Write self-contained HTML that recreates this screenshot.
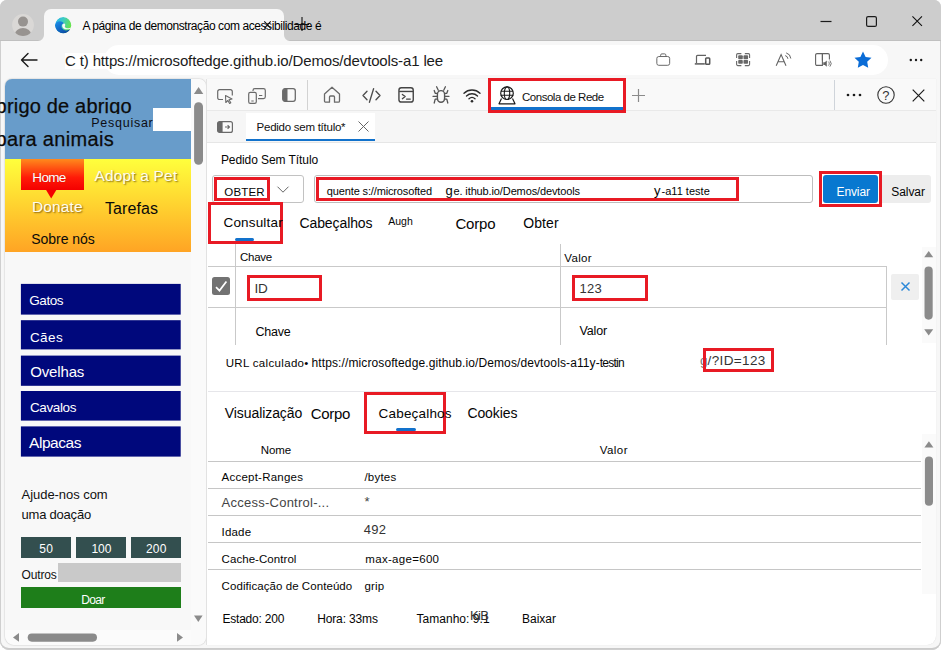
<!DOCTYPE html>
<html lang="pt"><head><meta charset="utf-8"><title>Consola de Rede</title>
<style>
html,body{margin:0;padding:0}
body{width:941px;height:650px;overflow:hidden;position:relative;background:#fff;font-family:"Liberation Sans",sans-serif;color:#1b1b1b}
.a{position:absolute}
.t{position:absolute;white-space:nowrap;line-height:20px;font-size:12px}
.rb{position:absolute;border:3px solid #e81a24;box-sizing:border-box}
svg{position:absolute;overflow:visible}
.hl{position:absolute;height:1px;background:#c8c8c8}
.vl{position:absolute;width:1px;background:#c8c8c8}
</style></head><body>
<div class="a" style="left:0;top:0;width:941px;height:650px;background:#f7f7f7;border-radius:7px 7px 9px 9px;overflow:hidden;box-shadow:inset 0 0 0 1px #cfcfcf,inset 0 -2px 0 #cbcbcb">
 <div class="a" style="left:0;top:0;width:941px;height:40.500px;background:#cdcdcd;box-shadow:inset 0 -1px 0 rgba(0,0,0,.06)"></div>
 <div class="a" style="left:44px;top:9px;width:240px;height:34px;background:#f7f7f7;border-radius:7px 7px 0 0"></div>
 <svg style="left:38px;top:34.500px" width="6" height="6" viewBox="0 0 6 6"><path d="M6 0V6H0A6 6 0 0 0 6 0z" fill="#f7f7f7"></path></svg>
 <svg style="left:284px;top:34.500px" width="6" height="6" viewBox="0 0 6 6"><path d="M0 0V6H6A6 6 0 0 1 0 0z" fill="#f7f7f7"></path></svg>
</div>
<!-- chrome -->
<!-- profile -->
<svg style="left:12px;top:14.200px" width="22" height="22" viewBox="0 0 22 22"><defs><clipPath id="pc"><circle cx="11" cy="11" r="10.900"></circle></clipPath></defs><circle cx="11" cy="11" r="10.900" fill="#dad8d6"></circle><circle cx="11" cy="7.600" r="5" fill="#979390"></circle><ellipse cx="11" cy="20.500" rx="8.200" ry="6.500" fill="#979390" clip-path="url(#pc)"></ellipse></svg>
<!-- edge logo -->
<svg style="left:54.800px;top:16.700px" width="16.400" height="16.400" viewBox="0 0 100 100"><defs><linearGradient id="eg1" x1="0" y1="0" x2="1" y2=".35"><stop offset="0" stop-color="#2cb2f0"></stop><stop offset=".5" stop-color="#3ccbc4"></stop><stop offset="1" stop-color="#68e34e"></stop></linearGradient><linearGradient id="eg2" x1="0" y1="0" x2=".8" y2="1"><stop offset="0" stop-color="#1c92ea"></stop><stop offset=".55" stop-color="#1266c4"></stop><stop offset="1" stop-color="#0b479a"></stop></linearGradient><clipPath id="ec"><circle cx="50" cy="50" r="50"></circle></clipPath></defs><g clip-path="url(#ec)"><circle cx="50" cy="50" r="50" fill="url(#eg1)"></circle><path d="M52 38C43 42 41 56 48 65C57 76 76 77 101 71L101 61C93 68 78 70 68 67C60 64 58 58 62 52C65 45 59 38 52 38Z" fill="#f7f7f7"></path><path d="M0 50C1 36 14 26 30 26C42 26 52 32 54 40C44 40 37 50 40 62C44 76 60 84 76 81C84 79.500 90 77 95 73C88 90 70 100 50 100C22 100 0 78 0 50Z" fill="url(#eg2)"></path></g></svg>
<div class="t" style="left: 82.4px; top: 16px; font-size: 12px; color: rgb(0, 0, 0); letter-spacing: -0.416px;">A página de demonstração com acessibilidade é</div>
<svg style="left:264.300px;top:21.300px" width="7" height="7.600" viewBox="0 0 7 7.600"><path d="M.3.300l6.400 7M6.700.3l-6.400 7" stroke="#111" stroke-width="1.100" fill="none"></path></svg>
<svg style="left:294.500px;top:17.200px" width="14" height="14" viewBox="0 0 14 14"><path d="M7 0v14M0 7.500h14" stroke="#111" stroke-width="1.100" fill="none"></path></svg>
<!-- window controls -->
<svg style="left:820px;top:16px" width="12" height="12" viewBox="0 0 12 12"><path d="M0.500 5.500h11" stroke="#1b1b1b" stroke-width="1.200"></path></svg>
<svg style="left:866px;top:16px" width="11" height="11" viewBox="0 0 11 11"><rect x=".6" y=".6" width="9.800" height="9.800" rx="1.500" fill="none" stroke="#1b1b1b" stroke-width="1.200"></rect></svg>
<svg style="left:911.700px;top:15.800px" width="10.400" height="10.400" viewBox="0 0 12 12"><path d="M.5.500l11 11M11.500.5l-11 11" stroke="#111" stroke-width="1.250" fill="none"></path></svg>
<!-- back arrow -->
<svg style="left:20px;top:52px" width="18" height="16" viewBox="0 0 18 16"><path d="M17 8H1.500M8 1.500L1.500 8 8 14.500" stroke="#1b1b1b" stroke-width="1.400" fill="none" stroke-linecap="round" stroke-linejoin="round"></path></svg>
<!-- address pill -->
<div class="a" style="left:104px;top:45px;width:784px;height:30px;background:#fff;border-radius:15px"></div>
<div class="a" style="left:65px;top:52.500px;width:45px;height:16.500px;background:#fff"></div>
<div class="t" style="left: 65px; top: 51px; font-size: 15px; letter-spacing: -0.138px;">C t) https://microsoftedge.github.io/Demos/devtools-a1 lee</div>
<!-- toolbar icons -->
<svg style="left:656px;top:53px" width="14.500" height="13.200" viewBox="0 0 16 15"><rect x=".7" y="4" width="14.600" height="10" rx="2.200" fill="none" stroke="#636363" stroke-width="1.100"></rect><path d="M5 4V2.500A1.500 1.500 0 0 1 6.500 1h3A1.500 1.500 0 0 1 11 2.500V4" fill="none" stroke="#636363" stroke-width="1.100"></path></svg>
<svg style="left:694px;top:53px" width="17" height="13" viewBox="0 0 17 13"><path d="M2.500 10V3.400A1 1 0 0 1 3.500 2.400H12" fill="none" stroke="#636363" stroke-width="1.200"></path><path d="M.8 10.900h10" stroke="#5a5a5a" stroke-width="1.500"></path><rect x="11.700" y="4.900" width="4" height="6.400" rx=".8" fill="#fff" stroke="#555" stroke-width="1.500"></rect></svg>
<svg style="left:736px;top:53px" width="14.200" height="13.200" viewBox="0 0 14 13"><path d="M5.300.6H1.800A1.200 1.200 0 0 0 .6 1.800V5M8.700.6h3.500a1.200 1.200 0 0 1 1.200 1.200V5M5.300 12.400H1.800A1.200 1.200 0 0 1 .6 11.200V8M8.700 12.400h3.500a1.200 1.200 0 0 0 1.200-1.200V8" fill="none" stroke="#6a6a6a" stroke-width="1.100"></path><rect x="2.200" y="2.300" width="4.500" height="3.800" rx=".8" fill="#686868"></rect><rect x="7.400" y="2.300" width="4.500" height="3.800" rx=".8" fill="#686868"></rect><rect x="2.200" y="6.900" width="4.500" height="3.800" rx=".8" fill="#686868"></rect><rect x="7.400" y="6.900" width="4.500" height="3.800" rx=".8" fill="#686868"></rect></svg>
<svg style="left:775px;top:52px" width="17" height="15" viewBox="0 0 17 15"><path d="M1.200 13.700L6.100 2.600l4.900 11.100M3 9.800h6.200" fill="none" stroke="#636363" stroke-width="1.100"></path><path d="M10.200 3.600a3.600 3.600 0 0 1 2.700 3.200M11.200 .9a6.300 6.300 0 0 1 4.600 5.600" fill="none" stroke="#636363" stroke-width="1"></path></svg>
<svg style="left:815px;top:53px" width="17" height="14" viewBox="0 0 17 14"><path d="M7.400 12.400H2A1.400 1.400 0 0 1 .6 11V2A1.400 1.400 0 0 1 2 .6H7.400zM7.400.6H13A1.400 1.400 0 0 1 14.400 2V6.500" fill="none" stroke="#636363" stroke-width="1.100"></path><path d="M7.400 .6V7.500" stroke="#636363" stroke-width="1.100"></path><path d="M8.300 9.300h1.500l2-1.900v6.400l-2-1.900H8.300z" fill="#636363"></path><path d="M13.300 8.600a2.600 2.600 0 0 1 0 4M14.900 7.600a4.500 4.500 0 0 1 0 6" fill="none" stroke="#636363" stroke-width=".9"></path></svg>
<svg style="left:854px;top:51px" width="18" height="17" viewBox="0 0 18 17"><path d="M9 .5l2.600 5.400 5.900.8-4.300 4.100 1 5.900L9 13.900l-5.200 2.800 1-5.900L.5 6.700l5.900-.8z" fill="#0a6cd6"></path></svg>
<svg style="left:908px;top:58px" width="16" height="4" viewBox="0 0 16 4"><circle cx="2.800" cy="2" r="1.200" fill="#1b1b1b"></circle><circle cx="8" cy="2" r="1.200" fill="#1b1b1b"></circle><circle cx="13.200" cy="2" r="1.200" fill="#1b1b1b"></circle></svg>
<!-- page -->

<div class="a" style="left:5px;top:79px;width:201px;height:566px;background:#f8f8f8;border-radius:7px 7px 8px 9px;overflow:hidden;box-shadow:0 0 1.500px rgba(0,0,0,.35)">
 <div class="a" style="left:0;top:0;width:186px;height:80px;background:#689cca"></div>
 <div class="a" style="left:0;top:80px;width:186px;height:93px;background:linear-gradient(#ffff3c 0%,#ffe033 35%,#ffa424 100%)"></div>
 <div class="a" style="left:16px;top:80px;width:63px;height:31px;background:linear-gradient(#ff8a1c 0%,#ff1a08 60%,#f40000 100%)"></div>
 <svg style="left:0;top:0" width="100" height="130"><path d="M40.800 110.500h10.800l-5.400 9z" fill="#f40000"></path></svg>
 <div class="a" style="left:148px;top:29px;width:38px;height:23px;background:#fff"></div>
 <div class="a" style="left:186px;top:0;width:15px;height:566px;background:#fafafa"></div>
</div>
<div class="t" style="left: -4.4px; top: 96px; font-size: 20px; color: rgb(11, 11, 11); -webkit-text-stroke: 0.25px rgb(11, 11, 11); letter-spacing: 0.184px;">brigo de abrigo</div>
<div class="t" style="left: -4.5px; top: 129px; font-size: 20px; color: rgb(11, 11, 11); -webkit-text-stroke: 0.25px rgb(11, 11, 11); letter-spacing: 0.332px;">para animais</div>
<div class="a" style="left:90px;top:113.500px;width:63px;height:17px;background:#689cca"></div>
<div class="t" style="left: 91.3px; top: 113px; font-size: 12.5px; color: rgb(12, 12, 20); letter-spacing: 0.734px;">Pesquisar</div>
<div class="t" style="left: 32.3px; top: 168px; font-size: 13.5px; color: rgb(255, 255, 255); text-shadow: rgba(120, 40, 0, 0.5) 0px 0px 1px; letter-spacing: -0.654px;">Home</div>
<div class="t" style="left: 94.4px; top: 166px; font-size: 15.5px; color: rgb(255, 253, 238); text-shadow: rgba(60, 30, 0, 0.6) 1px 1px 1.5px; letter-spacing: 0.18px;">Adopt a Pet</div>
<div class="t" style="left: 32px; top: 197px; font-size: 15.5px; color: rgb(255, 253, 238); text-shadow: rgba(60, 30, 0, 0.6) 1px 1px 1.5px; letter-spacing: 0.103px;">Donate</div>
<div class="t" style="left: 105px; top: 199px; font-size: 16px; color: rgb(10, 10, 10); letter-spacing: 0.076px;">Tarefas</div>
<div class="t" style="left: 31.2px; top: 229px; font-size: 14px; color: rgb(10, 10, 10); letter-spacing: -0.025px;">Sobre nós</div>
<svg style="left:0;top:0" width="200" height="1"><rect x="20.900" y="283.9" width="159.800" height="30.7" fill="#00087c"></rect></svg>
<div class="t" style="left: 29.2px; top: 291px; font-size: 13.5px; color: rgb(255, 255, 255); letter-spacing: -0.406px;">Gatos</div>
<svg style="left:0;top:0" width="200" height="1"><rect x="20.900" y="320.2" width="159.800" height="29.2" fill="#00087c"></rect></svg>
<div class="t" style="left: 30px; top: 328px; font-size: 13.5px; color: rgb(255, 255, 255); letter-spacing: 0.371px;">Cães</div>
<svg style="left:0;top:0" width="200" height="1"><rect x="20.900" y="355.6" width="159.800" height="30.2" fill="#00087c"></rect></svg>
<div class="t" style="left: 30.2px; top: 362px; font-size: 15px; color: rgb(255, 255, 255); letter-spacing: -0.147px;">Ovelhas</div>
<svg style="left:0;top:0" width="200" height="1"><rect x="20.900" y="391" width="159.800" height="29.6" fill="#00087c"></rect></svg>
<div class="t" style="left: 30px; top: 398px; font-size: 13.5px; color: rgb(255, 255, 255); letter-spacing: -0.397px;">Cavalos</div>
<svg style="left:0;top:0" width="200" height="1"><rect x="20.900" y="426.4" width="159.800" height="30.2" fill="#00087c"></rect></svg>
<div class="t" style="left: 29px; top: 433px; font-size: 15.5px; color: rgb(255, 255, 255); letter-spacing: -0.451px;">Alpacas</div>
<div class="t" style="left: 21.6px; top: 485px; font-size: 13px; color: rgb(17, 17, 17); letter-spacing: -0.055px;">Ajude-nos com</div>
<div class="t" style="left: 21.6px; top: 505px; font-size: 13px; color: rgb(17, 17, 17); letter-spacing: -0.226px;">uma doação</div>
<div class="a" style="left:20.8px;top:536.8px;width:50.1px;height:21px;background:#334f4f"></div>
<div class="t" style="left: 39.3px; top: 539px; font-size: 12px; color: rgb(255, 255, 255); letter-spacing: 0.32px;">50</div>
<div class="a" style="left:75.9px;top:536.8px;width:50.1px;height:21px;background:#334f4f"></div>
<div class="t" style="left: 91.4px; top: 539px; font-size: 12px; color: rgb(255, 255, 255); letter-spacing: 0.056px;">100</div>
<div class="a" style="left:130.7px;top:536.8px;width:50.5px;height:21px;background:#334f4f"></div>
<div class="t" style="left: 146px; top: 539px; font-size: 12px; color: rgb(255, 255, 255); letter-spacing: 0.156px;">200</div>
<div class="t" style="left: 21.6px; top: 565px; font-size: 12px; color: rgb(17, 17, 17); letter-spacing: -0.169px;">Outros</div>
<div class="a" style="left:58.200px;top:563.400px;width:123px;height:18.200px;background:#c9c9c9"></div>
<div class="a" style="left:20.800px;top:587.200px;width:160.400px;height:20.500px;background:#1e7e1a"></div>
<div class="t" style="left: 81.2px; top: 590px; font-size: 12px; color: rgb(255, 255, 255); letter-spacing: -0.629px;">Doar</div>

<div class="a" style="left:5px;top:629.500px;width:186px;height:15.500px;background:#fbfbfb;border-radius:0 0 0 9px"></div>
<svg style="left:191px;top:79px" width="15" height="566" viewBox="0 0 15 566">
 <path d="M2.900 14.900L7.600 7.900l4.700 7z" fill="#8b8b8b"></path>
 <rect x="3.100" y="23.300" width="8.900" height="62.400" rx="4.400" fill="#8b8b8b"></rect>
 <path d="M3 536.500L7.300 543l4.300-6.500z" fill="#8b8b8b"></path>
</svg>
<svg style="left:5px;top:630px" width="186" height="15" viewBox="0 0 186 15">
 <path d="M14 3L8 7.400 14 11.800z" fill="#8b8b8b"></path>
 <rect x="22.700" y="3.400" width="69.300" height="8.300" rx="4.100" fill="#8b8b8b"></rect>
 <path d="M172 3L178 7.400 172 11.800z" fill="#8b8b8b"></path>
</svg>
<!-- devtools -->

<div class="a" style="left:207px;top:78.500px;width:729px;height:566.500px;background:#fff;border-radius:0 0 9px 0;overflow:hidden;box-shadow:-1px 0 0 #e2e2e2,0 0 1px rgba(0,0,0,.15)">
 <div class="a" style="left:0;top:0;width:729px;height:31.500px;background:#f9f9f9;border-bottom:1px solid #e9e9e9"></div>
 <div class="a" style="left:0;top:32.500px;width:729px;height:30.500px;background:#f6f6f6;border-bottom:1px solid #e6e6e6"></div>
 <div class="a" style="left:39px;top:34px;width:129px;height:28.500px;background:#fff;border-bottom:2px solid #1272cc;box-sizing:border-box"></div>
</div>

<svg style="left:217px;top:89px" width="16" height="15" viewBox="0 0 16 15"><path d="M6 10.500H2.500A1.800 1.800 0 0 1 .7 8.700V2.500A1.800 1.800 0 0 1 2.500.7h11A1.800 1.800 0 0 1 15.300 2.500v4" fill="none" stroke="#6a6a6a" stroke-width="1.200"></path><path d="M8.500 6.500l6.500 3.500-3 .8 1.800 3-1.200.7-1.800-3-2 2z" fill="none" stroke="#6a6a6a" stroke-width="1.100" stroke-linejoin="round"></path></svg>
<svg style="left:248px;top:88px" width="18" height="16" viewBox="0 0 18 16"><path d="M5 3V2.500A1.800 1.800 0 0 1 6.800.7h8.700A1.800 1.800 0 0 1 17.300 2.500v6.300a1.800 1.800 0 0 1-1.800 1.800H10" fill="none" stroke="#6a6a6a" stroke-width="1.200"></path><rect x=".7" y="4.300" width="7.600" height="11" rx="1.600" fill="none" stroke="#6a6a6a" stroke-width="1.200"></rect><path d="M3.300 13h2.400M11 7.500h3.300" stroke="#6a6a6a" stroke-width="1.100"></path></svg>
<svg style="left:282px;top:88px" width="14" height="14" viewBox="0 0 14 14"><rect x=".7" y=".7" width="12.600" height="12.600" rx="2.200" fill="none" stroke="#6a6a6a" stroke-width="1.300"></rect><path d="M1 2.500A1.500 1.500 0 0 1 2.500 1H5.500V13H2.500A1.500 1.500 0 0 1 1 11.500z" fill="#6a6a6a"></path></svg>
<div class="a" style="left:307px;top:79.500px;width:1px;height:30px;background:#d2d2d2"></div>
<svg style="left:323px;top:86px" width="18" height="17" viewBox="0 0 18 17"><path d="M1.500 8L9 1.200 16.500 8v7a1.200 1.200 0 0 1-1.200 1.200H11.500V11a1 1 0 0 0-1-1h-3a1 1 0 0 0-1 1v5.200H2.700A1.200 1.200 0 0 1 1.500 15z" fill="none" stroke="#6a6a6a" stroke-width="1.300" stroke-linejoin="round"></path></svg>
<svg style="left:361.500px;top:87.500px" width="19" height="15" viewBox="0 0 19 15"><path d="M5 3.200L1 7.500 5 11.800M14 3.200l4 4.300-4 4.300M11.600.7l-4.200 13.600" fill="none" stroke="#4d4d4d" stroke-width="1.350" stroke-linecap="round" stroke-linejoin="round"></path></svg>
<svg style="left:398px;top:87px" width="16.200" height="15.800" viewBox="0 0 17 17"><rect x=".8" y=".8" width="15.400" height="15.400" rx="2.600" fill="none" stroke="#444" stroke-width="1.500"></rect><path d="M1 4.800h15" stroke="#444" stroke-width="1.500"></path><path d="M4.500 8l3 2.300-3 2.300M9 13h4" fill="none" stroke="#444" stroke-width="1.400" stroke-linecap="round" stroke-linejoin="round"></path></svg>
<svg style="left:432.300px;top:85.800px" width="18" height="18" viewBox="0 0 18 18"><rect x="5.400" y="4.600" width="7.200" height="11.600" rx="3.600" fill="none" stroke="#555" stroke-width="1.400"></rect><path d="M6.300 4.200L4.600.8M11.700 4.200L13.400.8M5.400 10.300H1M5.400 7.300H3.200L2.200 4.500M5.600 13.200H3.200L2.200 17M12.600 10.300H17M12.600 7.300h2.200l1-2.800M12.400 13.200h2.400l1 3.800" fill="none" stroke="#555" stroke-width="1.300" stroke-linecap="round" stroke-linejoin="round"></path></svg>
<svg style="left:463px;top:87.500px" width="18" height="15" viewBox="0 0 18 15"><path d="M1 5.200a11.500 11.500 0 0 1 16 0M3.500 8a8 8 0 0 1 11 0M6 10.700a4.500 4.500 0 0 1 6 0" fill="none" stroke="#2b2b2b" stroke-width="1.400" stroke-linecap="round"></path><circle cx="9" cy="13.300" r="1.300" fill="#2b2b2b"></circle></svg>
<div class="a" style="left:488px;top:78px;width:138px;height:35px;background:#fff"></div>
<div class="a" style="left:490px;top:107px;width:134px;height:3px;background:#1272cc"></div>
<div class="rb" style="left:488px;top:78px;width:138px;height:35px"></div>

<svg style="left:498px;top:86px" width="18" height="19" viewBox="0 0 18 19"><circle cx="9" cy="7.200" r="6.300" fill="none" stroke="#1b1b1b" stroke-width="1.200"></circle><ellipse cx="9" cy="7.200" rx="2.700" ry="6.300" fill="none" stroke="#1b1b1b" stroke-width="1.100"></ellipse><path d="M2.700 5.200h12.600M2.700 9.300h12.600" stroke="#1b1b1b" stroke-width="1.100"></path><path d="M3.500 12.500L1 17.800h16l-2.500-5.300" fill="none" stroke="#1b1b1b" stroke-width="1.200" stroke-linejoin="round"></path></svg>
<div class="t" style="left: 522px; top: 87px; font-size: 11.5px; color: rgb(17, 17, 17); letter-spacing: -0.478px;">Consola de Rede</div>
<svg style="left:632px;top:88.500px" width="13" height="13" viewBox="0 0 13 13"><path d="M6.500 0v13M0 6.500h13" stroke="#8a8a8a" stroke-width="1.200"></path></svg>
<div class="a" style="left:834px;top:79.500px;width:1px;height:30px;background:#cfd4da"></div>
<svg style="left:846px;top:93px" width="16" height="4" viewBox="0 0 16 4"><circle cx="2" cy="2" r="1.350" fill="#1b1b1b"></circle><circle cx="8" cy="2" r="1.350" fill="#1b1b1b"></circle><circle cx="14" cy="2" r="1.350" fill="#1b1b1b"></circle></svg>
<svg style="left:877px;top:86px" width="18" height="18" viewBox="0 0 18 18"><circle cx="9" cy="9" r="8.200" fill="none" stroke="#333" stroke-width="1.100"></circle></svg>
<div class="t" style="left:882.2px;top:86px;font-size:13px;color:#333;">?</div>
<svg style="left:911.500px;top:89px" width="13" height="13" viewBox="0 0 13 13"><path d="M.7.700l11.600 11.600M12.300.7L.7 12.300" stroke="#1b1b1b" stroke-width="1.200" fill="none"></path></svg>

<svg style="left:217px;top:121px" width="16" height="12" viewBox="0 0 16 12"><rect x=".6" y=".6" width="14.800" height="10.800" rx="2" fill="#fbfbfb" stroke="#6a6a6a" stroke-width="1.200"></rect><path d="M.6 2.600A2 2 0 0 1 2.600.6H5.600V11.400H2.600A2 2 0 0 1 .6 9.400z" fill="#6a6a6a"></path><path d="M8 6h4.300M10.600 4.100l1.900 1.900-1.900 1.900" fill="none" stroke="#6a6a6a" stroke-width="1.100"></path></svg>
<div class="t" style="left: 256.6px; top: 117px; font-size: 11.5px; color: rgb(17, 17, 17); letter-spacing: -0.258px;">Pedido sem título*</div>
<svg style="left:357.500px;top:121px" width="11" height="11" viewBox="0 0 11 11"><path d="M.5.500l10 10M10.500.5l-10 10" stroke="#666" stroke-width="1" fill="none"></path></svg>
<div class="t" style="left: 220.9px; top: 150px; font-size: 12px; color: rgb(5, 5, 5); letter-spacing: -0.072px;">Pedido Sem Título</div>
<div class="a" style="left:212px;top:175px;width:92px;height:28px;border:1px solid #c2c2c2;border-radius:3px;box-sizing:border-box;background:#fff"></div>
<div class="rb" style="left:214px;top:177px;width:56px;height:24px"></div>
<div class="t" style="left: 224.3px; top: 182px; font-size: 11.5px; color: rgb(5, 5, 5); letter-spacing: 0.155px;">OBTER</div>
<svg style="left:276.500px;top:186px" width="12" height="7" viewBox="0 0 12 7"><path d="M.5.700L6 6.200 11.500.7" fill="none" stroke="#666" stroke-width="1"></path></svg>
<div class="a" style="left:314px;top:175px;width:499px;height:28px;border:1px solid #bdbdbd;border-radius:3px;box-sizing:border-box;background:#fff"></div>
<div class="rb" style="left:316px;top:177px;width:423px;height:24px"></div>
<div class="t" style="left: 326.8px; top: 181px; font-size: 11px; color: rgb(5, 5, 5); letter-spacing: -0.138px;">quente s://microsofted</div>
<div class="t" style="left:445.5px;top:181px;font-size:13px;color:#050505;">g</div>
<div class="t" style="left: 453.5px; top: 181px; font-size: 11px; color: rgb(5, 5, 5); letter-spacing: -0.121px;">e. ithub.io/Demos/devtools</div>
<div class="t" style="left:654px;top:181px;font-size:13px;color:#050505;">y</div>
<div class="t" style="left: 661.5px; top: 181px; font-size: 11px; color: rgb(5, 5, 5); letter-spacing: 0.019px;">-a11 teste</div>
<div class="a" style="left:881px;top:175px;width:50px;height:28px;background:#ededed;border-radius:0 3px 3px 0"></div>
<div class="a" style="left:822.800px;top:174.700px;width:55.400px;height:28.500px;background:#0878d0;border-radius:3px"></div>
<div class="rb" style="left:819px;top:171px;width:63px;height:36px"></div>
<div class="t" style="left: 836.6px; top: 182px; font-size: 12px; color: rgb(255, 255, 255); letter-spacing: -0.136px;">Enviar</div>
<div class="t" style="left: 891.3px; top: 182px; font-size: 12px; color: rgb(5, 5, 5); letter-spacing: -0.069px;">Salvar</div>
<div class="rb" style="left:208px;top:202px;width:75px;height:42px"></div>
<div class="t" style="left: 223.5px; top: 213px; font-size: 13.5px; color: rgb(5, 5, 5); letter-spacing: 0.169px;">Consultar</div>
<div class="a" style="left:234.600px;top:238px;width:19.500px;height:2.800px;background:#1272cc;border-radius:1.600px"></div>
<div class="t" style="left: 299.5px; top: 213px; font-size: 14px; color: rgb(5, 5, 5); letter-spacing: -0.104px;">Cabeçalhos</div>
<div class="t" style="left: 388.3px; top: 211px; font-size: 10.5px; color: rgb(5, 5, 5); letter-spacing: -0.008px;">Augh</div>
<div class="t" style="left: 455.4px; top: 214px; font-size: 15px; color: rgb(5, 5, 5); letter-spacing: -0.172px;">Corpo</div>
<div class="t" style="left: 523.3px; top: 213px; font-size: 14px; color: rgb(5, 5, 5); letter-spacing: 0.057px;">Obter</div>
<div class="vl" style="left:235px;top:243.600px;height:101px;background:#c9c9c9"></div>
<div class="vl" style="left:560px;top:243.600px;height:101px;background:#c9c9c9"></div>
<div class="vl" style="left:886px;top:266px;height:78.600px;background:#c9c9c9"></div>
<div class="hl" style="left:207.500px;top:266px;width:679px;background:#c9c9c9"></div>
<div class="hl" style="left:207.500px;top:306.500px;width:679px;background:#c9c9c9"></div>
<div class="t" style="left: 240.1px; top: 247px; font-size: 11.5px; color: rgb(5, 5, 5); letter-spacing: -0.29px;">Chave</div>
<div class="t" style="left: 564.3px; top: 248px; font-size: 11.5px; color: rgb(5, 5, 5); letter-spacing: 0.34px;">Valor</div>
<svg style="left:212px;top:277px" width="18" height="18" viewBox="0 0 18 18"><rect width="18" height="18" rx="2.500" fill="#727272"></rect><path d="M4 10.100l3.500 3.500L14.400 4.600" fill="none" stroke="#fff" stroke-width="1.700"></path></svg>
<div class="rb" style="left:247px;top:275px;width:75px;height:26px"></div>
<div class="t" style="left: 254.4px; top: 279px; font-size: 13.5px; color: rgb(51, 51, 51); letter-spacing: -0.05px;">ID</div>
<div class="rb" style="left:572px;top:275px;width:76px;height:26px"></div>
<div class="t" style="left: 579.6px; top: 279px; font-size: 13px; color: rgb(51, 51, 51); letter-spacing: 0.166px;">123</div>
<div class="a" style="left:890.700px;top:274.100px;width:28.500px;height:26.400px;background:#efefef;border-radius:2px"></div>
<svg style="left:900.500px;top:282.400px" width="9" height="9" viewBox="0 0 9 9"><path d="M.5.500l8 8M8.500.5l-8 8" stroke="#2b88d8" stroke-width="1.500" fill="none"></path></svg>
<div class="t" style="left: 255.4px; top: 322px; font-size: 12.5px; color: rgb(5, 5, 5); letter-spacing: -0.228px;">Chave</div>
<div class="t" style="left: 579.6px; top: 321px; font-size: 12.5px; color: rgb(5, 5, 5); letter-spacing: -0.193px;">Valor</div>

<div class="a" style="left:921.500px;top:247px;width:14.500px;height:96px;background:#fafafa"></div>
<svg style="left:921.500px;top:247px" width="14.500" height="96" viewBox="0 0 14.500 96">
 <path d="M2.200 10.300L6.700 4l4.500 6.300z" fill="#8b8b8b"></path>
 <rect x="2.500" y="19.400" width="8.200" height="53.300" rx="4.100" fill="#8b8b8b"></rect>
 <path d="M2.200 82.300L6.700 88.600l4.500-6.300z" fill="#8b8b8b"></path>
</svg>
<div class="t" style="left: 225.7px; top: 353px; font-size: 11.5px; color: rgb(5, 5, 5); letter-spacing: 0.329px;">URL calculado•</div>
<div class="t" style="left: 311.5px; top: 353px; font-size: 12px; color: rgb(5, 5, 5); letter-spacing: 0.11px;">https://microsoftedge.github.io/Demos/devtools-a11y-</div>
<div class="t" style="left: 599.8px; top: 353px; font-size: 12px; color: rgb(5, 5, 5); letter-spacing: -0.781px;">testin</div>
<div class="t" style="left:700px;top:351px;font-size:13.5px;color:#777;">g</div>
<div class="rb" style="left:703px;top:348px;width:71px;height:24px"></div>
<div class="t" style="left: 707.5px; top: 351px; font-size: 13.5px; color: rgb(51, 51, 51); letter-spacing: 0.379px;">/?ID=123</div>
<div class="hl" style="left:207.500px;top:391px;width:728.500px;background:#e6e6ea"></div>
<div class="t" style="left: 224.8px; top: 403px; font-size: 14px; color: rgb(5, 5, 5); letter-spacing: -0.08px;">Visualização</div>
<div class="t" style="left: 310.8px; top: 404px; font-size: 15px; color: rgb(5, 5, 5); letter-spacing: -0.332px;">Corpo</div>
<div class="rb" style="left:364px;top:392px;width:82px;height:42px"></div>
<div class="t" style="left: 378.6px; top: 404px; font-size: 13.5px; color: rgb(5, 5, 5); letter-spacing: 0.18px;">Cabeçalhos</div>
<div class="a" style="left:396.100px;top:428.100px;width:19.900px;height:2.700px;background:#1272cc;border-radius:1.500px"></div>
<div class="t" style="left: 467.4px; top: 403px; font-size: 14px; color: rgb(5, 5, 5); letter-spacing: -0.085px;">Cookies</div>
<div class="t" style="left: 260.8px; top: 440px; font-size: 11.5px; color: rgb(5, 5, 5); letter-spacing: -0.097px;">Nome</div>
<div class="t" style="left: 599.7px; top: 440px; font-size: 11.5px; color: rgb(5, 5, 5); letter-spacing: 0.46px;">Valor</div>
<div class="hl" style="left:207.500px;top:461px;width:713.500px;background:#c6c6c6"></div>
<div class="hl" style="left:207.500px;top:488px;width:713.500px;background:#c6c6c6"></div>
<div class="hl" style="left:207.500px;top:515px;width:713.500px;background:#c6c6c6"></div>
<div class="hl" style="left:207.500px;top:542px;width:713.500px;background:#c6c6c6"></div>
<div class="hl" style="left:207.500px;top:569px;width:713.500px;background:#c6c6c6"></div>
<div class="t" style="left: 221.6px; top: 467px; font-size: 11.5px; color: rgb(5, 5, 5); letter-spacing: 0.229px;">Accept-Ranges</div>
<div class="t" style="left: 364.4px; top: 467px; font-size: 11.5px; color: rgb(5, 5, 5); letter-spacing: 0.219px;">/bytes</div>
<div class="t" style="left: 221.6px; top: 493px; font-size: 13px; color: rgb(68, 68, 68); letter-spacing: 0.244px;">Access-Control-...</div>
<div class="t" style="left:364.4px;top:492px;font-size:13px;color:#444;">*</div>
<div class="t" style="left: 221.6px; top: 522px; font-size: 11.5px; color: rgb(5, 5, 5); letter-spacing: 0.164px;">Idade</div>
<div class="t" style="left: 363.8px; top: 520px; font-size: 13px; color: rgb(51, 51, 51); letter-spacing: 0.199px;">492</div>
<div class="t" style="left: 221.6px; top: 549px; font-size: 11.5px; color: rgb(5, 5, 5); letter-spacing: 0.057px;">Cache-Control</div>
<div class="t" style="left: 365.3px; top: 549px; font-size: 11.5px; color: rgb(5, 5, 5); letter-spacing: 0.304px;">max-age=600</div>
<div class="t" style="left: 221.6px; top: 576px; font-size: 11.5px; color: rgb(5, 5, 5); letter-spacing: 0.067px;">Codificação de Conteúdo</div>
<div class="t" style="left: 364.4px; top: 576px; font-size: 11.5px; color: rgb(5, 5, 5); letter-spacing: 0.203px;">grip</div>
<div class="t" style="left: 222.5px; top: 609px; font-size: 12px; color: rgb(5, 5, 5); letter-spacing: -0.224px;">Estado: 200</div>
<div class="t" style="left: 317.2px; top: 609px; font-size: 12px; color: rgb(5, 5, 5); letter-spacing: -0.143px;">Hora: 33ms</div>
<div class="t" style="left: 416.4px; top: 609px; font-size: 12px; color: rgb(5, 5, 5); letter-spacing: 0.048px;">Tamanho: 9.1</div>
<div class="t" style="left: 469.9px; top: 606px; font-size: 13px; color: rgb(51, 51, 51); letter-spacing: -0.545px;">KiB</div>
<div class="t" style="left: 522px; top: 609px; font-size: 12px; color: rgb(5, 5, 5); letter-spacing: -0.003px;">Baixar</div>

<div class="a" style="left:921.500px;top:434px;width:14.500px;height:159.500px;background:#fafafa"></div>
<svg style="left:921.500px;top:434px" width="14.500" height="160" viewBox="0 0 14.500 160">
 <path d="M2.400 13.500L6.900 7.200l4.500 6.300z" fill="#8b8b8b"></path>
 <rect x="2.900" y="22.400" width="8.100" height="49.400" rx="4" fill="#8b8b8b"></rect>
</svg>

</body></html>
